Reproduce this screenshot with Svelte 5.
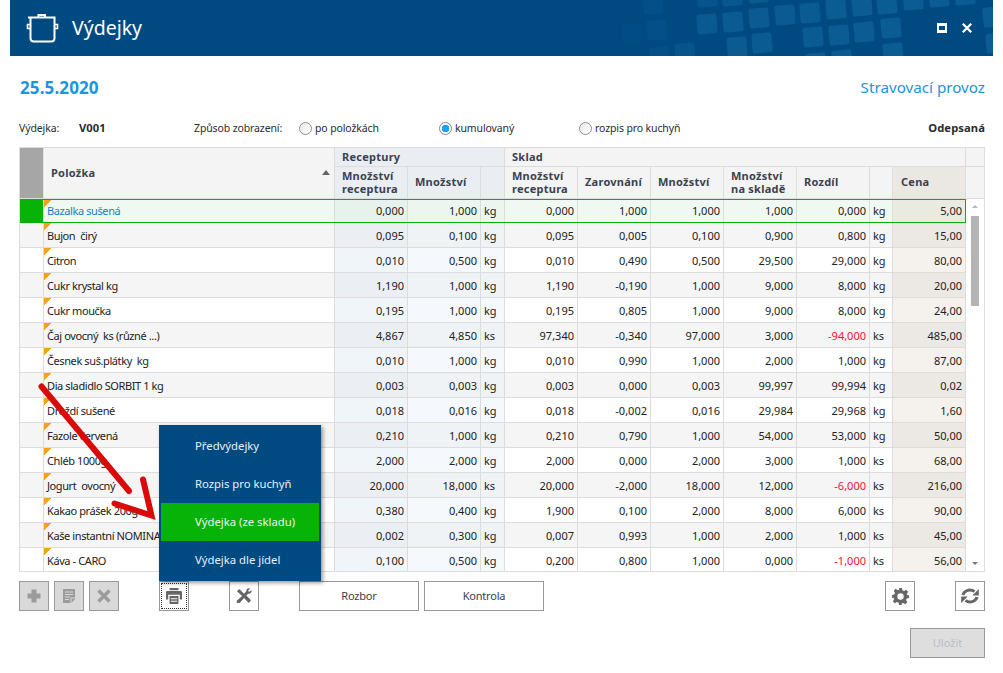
<script>
  const tiles = [
    [622,23,.12],[647,20,.3],[643,-6,.3],[650,47,.3],[675,43,.55],
    [697,-13,.6],[722,-14,.7],[748,-17,.8],
    [697,14,.8],[723,12,.9],[749,8,.9],[775,5,.9],[800,3,.95],[826,-1,1],[852,-4,1],[877,-6,1],[903,-10,1],[929,-13,1],[955,-15,1],
    [727,37,.9],[752,33,.95],[806,53,.9],[832,50,.9],[803,27,.95],[829,25,1],[854,22,1],[881,18,1],[883,43,1],
    [983,7,1],[986,33,1]
  ];
  const rows = [
    ['Bazalka sušená','0,000','1,000','kg','0,000','1,000','1,000','1,000','0,000','kg','5,00'],
    ['Bujon  čirý','0,095','0,100','kg','0,095','0,005','0,100','0,900','0,800','kg','15,00'],
    ['Citron','0,010','0,500','kg','0,010','0,490','0,500','29,500','29,000','kg','80,00'],
    ['Cukr krystal kg','1,190','1,000','kg','1,190','-0,190','1,000','9,000','8,000','kg','20,00'],
    ['Cukr moučka','0,195','1,000','kg','0,195','0,805','1,000','9,000','8,000','kg','24,00'],
    ['Čaj ovocný  ks (různé ...)','4,867','4,850','ks','97,340','-0,340','97,000','3,000','-94,000','ks','485,00'],
    ['Česnek suš.plátky  kg','0,010','1,000','kg','0,010','0,990','1,000','2,000','1,000','kg','87,00'],
    ['Dia sladidlo SORBIT 1 kg','0,003','0,003','kg','0,003','0,000','0,003','99,997','99,994','kg','0,02'],
    ['Droždí sušené','0,018','0,016','kg','0,018','-0,002','0,016','29,984','29,968','kg','1,60'],
    ['Fazole červená','0,210','1,000','kg','0,210','0,790','1,000','54,000','53,000','kg','50,00'],
    ['Chléb 1000g','2,000','2,000','kg','2,000','0,000','2,000','3,000','1,000','ks','68,00'],
    ['Jogurt  ovocný','20,000','18,000','ks','20,000','-2,000','18,000','12,000','-6,000','ks','216,00'],
    ['Kakao prášek 200g','0,380','0,400','kg','1,900','0,100','2,000','8,000','6,000','ks','90,00'],
    ['Kaše instantní NOMINAL','0,002','0,300','kg','0,007','0,993','1,000','2,000','1,000','ks','45,00'],
    ['Káva - CARO','0,100','0,500','kg','0,200','0,800','1,000','0,000','-1,000','ks','56,00']
  ];
  const cellClass = ['', 'rc1', 'rc2', 'rc3 unit', '', '', '', '', '', 'unit', 'price'];
</script>

<div class="window">
  <header class="titlebar">
    <svg class="tiles" width="983" height="56" viewBox="10 0 983 56" aria-hidden="true">
      {#each tiles as t}
        <rect x={t[0]} y={t[1]} width="20" height="20" rx="2.5" fill="#0c5c94" opacity={t[2]} transform="rotate(-5 {t[0] + 10} {t[1] + 10})" />
      {/each}
    </svg>
    <svg class="pot" width="34" height="30" viewBox="0 0 34 30" fill="none" stroke="#fff" stroke-width="2" aria-hidden="true">
      <path d="M3 4.500H30.500M13.500 4V2H20V4" />
      <path d="M5.500 5V25Q5.500 28.500 9 28.500H26Q29.500 28.500 29.500 25V5" />
      <path d="M5 11.500H2.500V15.500H5M30 11.500H32.500V15.500H30" stroke-width="1.600" />
    </svg>
    <h1>Výdejky</h1>
    <div class="winbtns">
      <span class="maxi"></span>
      <svg width="10" height="10" viewBox="0 0 10 10" stroke="#fff" stroke-width="2.200" aria-hidden="true"><path d="M.8 .8L9.200 9.200M9.200 .8L.8 9.200" /></svg>
    </div>
  </header>

  <main class="content">
    <div class="dateline">
      <strong class="date">25.5.2020</strong>
      <span class="place">Stravovací provoz</span>
    </div>

    <div class="info">
      <span class="l1">Výdejka:</span>
      <b class="l2">V001</b>
      <span class="l3">Způsob zobrazení:</span>
      <label class="radio r1"><i></i>po položkách</label>
      <label class="radio r2"><i class="on"></i>kumulovaný</label>
      <label class="radio r3"><i></i>rozpis pro kuchyň</label>
      <b class="state">Odepsaná</b>
    </div>

    <div class="table">
      <div class="thead">
        <div class="h marker"></div>
        <div class="h item">Položka<span class="sort"></span></div>
        <div class="h group rec">Receptury</div>
        <div class="h group sklad">Sklad</div>
        <div class="h corner"></div>
        <div class="h sub rec">Množství<br />receptura</div>
        <div class="h sub rec">Množství</div>
        <div class="h sub rec"></div>
        <div class="h sub">Množství<br />receptura</div>
        <div class="h sub">Zarovnání</div>
        <div class="h sub">Množství</div>
        <div class="h sub">Množství<br />na skladě</div>
        <div class="h sub">Rozdíl</div>
        <div class="h sub"></div>
        <div class="h sub pricehead">Cena</div>
        <div class="h corner2"></div>
      </div>

      <div class="tbody">
        <div class="rows">
          {#each rows as r, i}
            <div class="row" class:alt={i % 2 === 1} class:sel={i === 0}>
              <div class="c mark"></div>
              <div class="c name">{r[0]}</div>
              {#each r.slice(1) as v, j}
                <div class="c num {cellClass[j + 1]}" class:neg={v.startsWith('-') && j > 5}>{v}</div>
              {/each}
            </div>
          {/each}
        </div>
        <div class="scroll">
          <span class="up"></span>
          <span class="thumb"></span>
          <span class="down"></span>
        </div>
      </div>
    </div>

    <div class="toolbar">
      <button class="sq dis" aria-label="Přidat">
        <svg width="16" height="16" viewBox="0 0 16 16" fill="#9b9b9b"><path d="M5.500 1.500H10.500V5.500H14.500V10.500H10.500V14.500H5.500V10.500H1.500V5.500H5.500Z" /></svg>
      </button>
      <button class="sq dis" aria-label="Upravit">
        <svg width="16" height="16" viewBox="0 0 16 16"><path fill="#9b9b9b" d="M2 1H14V9.500H9.500V15H2Z" /><path fill="#9b9b9b" d="M10.500 15L14.500 10.500H10.500Z" /><path stroke="#d9d9d9" stroke-width="1" d="M4 4H12M4 6.500H12M4 9H9M4 11.500H8" /></svg>
      </button>
      <button class="sq dis" aria-label="Smazat">
        <svg width="14" height="14" viewBox="0 0 14 14" stroke="#9b9b9b" stroke-width="3.400"><path d="M1.500 1.500L12.500 12.500M12.500 1.500L1.500 12.500" /></svg>
      </button>
      <button class="sq print" aria-label="Tisk">
        <svg width="16" height="16" viewBox="0 0 18 18" fill="#666"><path d="M4 0H14V2.500H4Z" /><path d="M0 5Q0 3.500 1.500 3.500H16.500Q18 3.500 18 5V13H15.500V7.500H2.500V13H0Z" /><path d="M4 9H14V18H4ZM5.500 11.500V12.700H12.500V11.500ZM5.500 14.300V15.500H12.500V14.300Z" fill-rule="evenodd" /></svg>
      </button>
      <button class="sq tool" aria-label="Nástroje">
        <svg width="16" height="16" viewBox="0 0 17 17" fill="#666"><path d="M1 3.500L3.500 1L8.500 6L11 3.500Q10.500 1.500 12.500 .6Q14 0 15 .6L12.800 2.800L14.200 4.200L16.400 2Q17 3.500 16 5Q14.800 6.500 13 6L11 8L16 13L13.500 16L8.500 10.500L4 16H1.500L.8 15.300V13.500L6.500 8.500Z" /></svg>
      </button>
      <button class="wide b1">Rozbor</button>
      <button class="wide">Kontrola</button>
      <span class="grow"></span>
      <button class="sq" aria-label="Nastavení">
        <svg width="17" height="17" viewBox="0 0 24 24" fill="#666"><path fill-rule="evenodd" d="M10 0H14L14.700 3.300L17.100 4.300L20 2.500L22.800 5.300L21 8.200L22 10.500L24 10V14L20.800 14.700L19.800 17.100L21.600 20L18.800 22.800L15.900 21L13.500 22L14 24H10L9.300 20.800L6.900 19.800L4 21.600L1.200 18.800L3 15.900L2 13.500L0 14V10L3.200 9.300L4.200 6.900L2.400 4L5.200 1.200L8.100 3L10.500 2ZM12 7.500A4.500 4.500 0 1 0 12 16.500A4.500 4.500 0 1 0 12 7.500Z" /></svg>
      </button>
      <button class="sq last" aria-label="Obnovit">
        <svg width="18" height="16" viewBox="0 0 18 16" fill="none" stroke="#666" stroke-width="3"><path d="M2 7A7 6.200 0 0 1 13.500 3.600" /><path d="M16 9A7 6.200 0 0 1 4.500 12.400" /><path d="M17.800 1V7.500H11.300Z" fill="#666" stroke="none" /><path d="M.2 15V8.500H6.700Z" fill="#666" stroke="none" /></svg>
      </button>
    </div>

    <div class="savebar"><button class="save" disabled>Uložit</button></div>

    <nav class="menu">
      <div class="mi">Předvýdejky</div>
      <div class="mi">Rozpis pro kuchyň</div>
      <div class="mi active">Výdejka (ze skladu)</div>
      <div class="mi">Výdejka dle jídel</div>
    </nav>

    <svg class="arrow" width="130" height="150" viewBox="35 380 130 150" fill="none" stroke="#d90a0a" stroke-width="6" stroke-linecap="round" aria-hidden="true">
      <path d="M41.500 386.500L129 491" />
      <path d="M143 479.500L151.500 515.500L114.500 503.500" stroke-linejoin="miter" stroke-linecap="round" />
    </svg>
  </main>
</div>

<style>
  :global(body) { margin: 0; background: #fff; }
  .window {
    width: 983px;
    height: 673px;
    margin-left: 10px;
    position: relative;
    font-family: "Noto Sans", "Open Sans", sans-serif;
    font-size: 11px;
    color: #2b2b33;
    overflow: hidden;
  }
  .titlebar {
    height: 56px;
    background: #004a82;
    display: flex;
    align-items: center;
    position: relative;
    color: #fff;
  }
  .tiles { position: absolute; left: 0; top: 0; }
  .pot { position: relative; margin-left: 15px; margin-top: -1px; }
  h1 {
    position: relative;
    margin: 0 0 0 13px;
    font-size: 19.500px;
    font-weight: 400;
    line-height: 56px;
  }
  .winbtns {
    position: relative;
    margin-left: auto;
    margin-right: 21px;
    display: flex;
    align-items: center;
    gap: 15px;
  }
  .maxi {
    width: 10px; height: 10px;
    box-sizing: border-box;
    border: 2px solid #fff;
    border-top-width: 3px;
    border-bottom-width: 3px;
    display: block;
  }
  .content { padding: 19px 8px 0 9px; position: relative; }
  .dateline {
    display: flex;
    justify-content: space-between;
    align-items: center;
    height: 24px;
    color: #1b95dd;
  }
  .date { font-size: 17px; font-weight: 700; letter-spacing: .12px; padding-left: 1px; }
  .place { font-size: 15.200px; }
  .info {
    position: relative;
    display: grid;
    grid-template-columns: 60px 115px 105px 140px 140px 1fr auto;
    height: 24px;
    margin-top: 17px;
    align-items: center;
    line-height: 16px;
    font-size: 10.500px;
    letter-spacing: -.12px;
  }
  .info b { font-weight: 700; font-size: 11.200px; letter-spacing: .1px; }
  .state { justify-self: end; }
  .radio { display: flex; align-items: center; gap: 3px; }
  .radio i {
    width: 13px; height: 13px;
    box-sizing: border-box;
    border: 1px solid #8e8e8e;
    border-radius: 50%;
    background: linear-gradient(135deg, #e8e8e8, #fff);
    display: block;
  }
  .radio i.on { background: radial-gradient(circle, #14a4f0 0 3.500px, #fff 4px); border-color: #7c8a96; }
  .table {
    width: 966px;
    box-sizing: border-box;
    border: 1px solid #dcdcdc;
    margin-top: 7px;
    height: 425px;
    overflow: hidden;
  }
  .thead {
    display: grid;
    grid-template-columns: 24px 291px 73px 73px 24px 73px 73px 73px 73px 73px 23px 73px 18px;
    grid-template-rows: 19px 31px;
    border-bottom: 1px solid #dcdcdc;
    box-sizing: border-box;
    height: 51px;
  }
  .h {
    background: #f4f4f4;
    box-sizing: border-box;
    border-right: 1px solid #dcdcdc;
    display: flex;
    align-items: center;
    padding-left: 7px;
    padding-bottom: 2px;
    font-weight: 700;
    line-height: 13px;
    letter-spacing: .25px;
    color: #3c4150;
    font-size: 11px;
  }
  .marker { grid-row: 1 / 3; background: #a6a6a6; border-right-color: #e2e2e2; }
  .item { grid-row: 1 / 3; position: relative; }
  .sort {
    position: absolute;
    right: 4px; top: 22px;
    width: 0; height: 0;
    border: 4px solid transparent;
    border-top: 0;
    border-bottom: 5px solid #666;
  }
  .group { border-bottom: 1px solid #dcdcdc; }
  .group.rec { grid-column: 3 / 6; background: #eaeef3; }
  .group.sklad { grid-column: 6 / 13; }
  .corner { border-right: 0; border-bottom: 1px solid #dcdcdc; }
  .corner2 { border-right: 0; }
  .sub.rec { background: #eaeef3; }
  .h.sub { padding-left: 7px; }
  .h.pricehead { background: #ebe7e2; padding-left: 8px; }

  .tbody { display: flex; height: 372px; }
  .rows { width: 946px; overflow: hidden; }
  .row {
    display: grid;
    grid-template-columns: 24px 291px 73px 73px 24px 73px 73px 73px 73px 73px 23px 73px;
    height: 25px;
    box-sizing: border-box;
    background: #fff;
    border-bottom: 1px solid #dcdcdc;
    color: #222;
  }
  .row.alt { background: #f5f5f5; }
  .c {
    box-sizing: border-box;
    border-right: 1px solid #dcdcdc;
    line-height: 26px;
    white-space: nowrap;
    overflow: hidden;
  }
  .name {
    padding-left: 3px;
    white-space: pre;
    letter-spacing: -.4px;
    background: linear-gradient(135deg, #f6a31c 0 5px, transparent 5px) no-repeat;
  }
  .num { text-align: right; padding-right: 3px; }
  .num.unit { text-align: left; padding-left: 3px; padding-right: 0; }
  .neg { color: #ff1030; }
  .rc1 { background: #f0f5fa; }
  .rc2 { background: #f5f9fd; }
  .rc3 { background: #f5f9fd; }
  .alt .rc1 { background: #ebeff3; }
  .alt .rc2 { background: #f0f3f6; }
  .alt .rc3 { background: #f0f3f6; }
  .price { background: #f5f1ec; }
  .alt .price { background: #ece8e3; }
  .sel {
    background: #f0f9f1;
    border-top: 1px solid #0aaf0a;
    border-bottom: 1px solid #0aaf0a;
    height: 24px;
  }
  .sel .c { background-color: #f0f9f1; line-height: 22px; }
  .sel .mark { background: #08b308; }
  .sel .name { color: #1b7fc4; background: linear-gradient(135deg, #f6a31c 0 5px, transparent 5px) no-repeat, #f0f9f1; }
  .sel .rc1 { background: #e8f2ec; }
  .sel .rc2 { background: #ecf6ef; }
  .sel .rc3 { background: #ecf6ef; }
  .sel .price { background: #e9ebe1; border-right-color: #0aaf0a; }
  .scroll {
    width: 18px;
    position: relative;
    display: flex;
    flex-direction: column;
    align-items: center;
    padding-top: 6px;
    box-sizing: border-box;
    height: 372px;
  }
  .up, .down { width: 0; height: 0; border: 3.500px solid transparent; }
  .up { border-top: 0; border-bottom: 3px solid #b5b5b5; }
  .down { border-bottom: 0; border-top: 3px solid #777; margin-top: auto; margin-bottom: 6px; }
  .thumb { width: 8px; height: 90px; background: #b4b4b4; margin-top: 8px; }

  .toolbar { display: flex; margin-top: 9px; height: 30px; }
  button {
    font: inherit;
    color: #3c4150;
    background: #fff;
    border: 1px solid #999;
    padding: 0;
    box-sizing: border-box;
    display: flex;
    align-items: center;
    justify-content: center;
  }
  .sq { width: 30px; height: 30px; margin-right: 5px; }
  .sq.dis { background: #d9d9d9; border-color: #999; }
  .sq.print { margin-left: 35px; outline: 1px dotted #333; outline-offset: -3px; }
  .sq.tool { margin-left: 35px; margin-right: 40px; }
  .wide { width: 120px; height: 30px; margin-right: 5px; letter-spacing: -.2px; padding-bottom: 2px; }
  .grow { flex: 1; }
  .sq:nth-last-child(2) { margin-right: 40px; }
  .sq.last { margin-right: 0; }
  .savebar { display: flex; justify-content: flex-end; margin-top: 17px; }
  .save {
    width: 75px; height: 30px;
    background: #dedede;
    color: #b9bdcb;
    font-size: 11px;
    padding-bottom: 2px;
  }
  .menu {
    position: absolute;
    left: 149px;
    top: 369px;
    width: 162px;
    height: 156px;
    box-sizing: border-box;
    padding: 2px;
    background: #004a82;
    box-shadow: 2px 2px 4px rgba(0,0,0,.4);
    color: #fff;
    font-size: 11.300px;
  }
  .mi { height: 38px; line-height: 38px; padding-left: 34px; color: #e8f0f7; }
  .mi.active { background: #08b308; }
  .arrow { position: absolute; left: 25px; top: 324px; }
</style>
